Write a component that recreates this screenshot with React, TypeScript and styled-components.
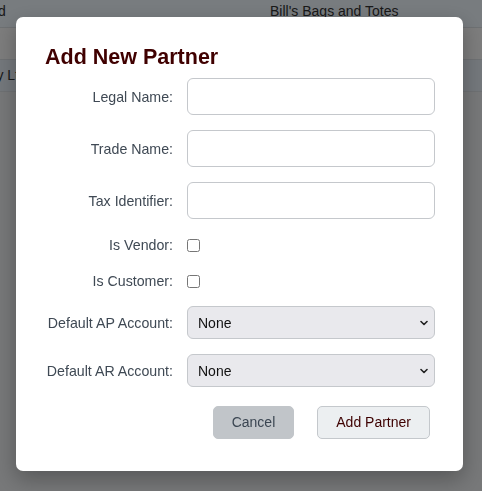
import React from "react";
import styled, { createGlobalStyle } from "styled-components";

const GlobalStyle = createGlobalStyle`
  html, body {
    margin: 0;
    padding: 0;
    background: #eef0f2;
    font-family: "Liberation Sans", Arial, sans-serif;
  }
`;

const Page = styled.div`
  width: 100%;
  height: 491px;
  overflow: hidden;
  background: #eef0f2;
`;

const Table = styled.div`
  margin: -4px 0 0 -79px;
  display: flex;
  flex-direction: column;
`;

const TableRow = styled.div<{ $bg: string }>`
  display: grid;
  grid-template-columns: 349px 1fr;
  height: 30px;
  padding-bottom: 1px;
  align-items: center;
  background: ${(p) => p.$bg};
  border-bottom: 1px solid #dde2e7;
  font-size: 14px;
  color: #333;
`;

const Overlay = styled.div`
  position: fixed;
  inset: 0;
  background: rgba(0, 0, 0, 0.5);
  display: flex;
  align-items: flex-start;
  padding: 17px 16px;
`;

const Modal = styled.div`
  width: 447px;
  box-sizing: border-box;
  background: #fff;
  border-radius: 7px;
  padding: 28px 28px 32px;
  box-shadow: 0 8px 22px rgba(0, 0, 0, 0.28);
`;

const Title = styled.h2`
  margin: 0 0 8px 1px;
  font-size: 21.5px;
  line-height: 25px;
  font-weight: 700;
  color: #400000;
`;

const Form = styled.form`
  display: grid;
  grid-template-columns: 129px 1fr;
  column-gap: 14px;
  row-gap: 15px;
  align-items: center;
`;

const Label = styled.label`
  text-align: right;
  font-size: 14.2px;
  color: #3f4954;
`;

const TextInput = styled.input`
  box-sizing: border-box;
  height: 37px;
  width: 100%;
  border: 1px solid #c5c8cc;
  border-radius: 6px;
  background: #fff;
  padding: 0 10px;
  font: 14px "Liberation Sans", Arial, sans-serif;
`;

const CheckCell = styled.div`
  height: 21px;
  display: flex;
  align-items: center;
`;

const Check = styled.input`
  margin: 2px 0 0 0;
  width: 13px;
  height: 13px;
`;

const SelectWrap = styled.div`
  position: relative;
  height: 33px;
`;

const Select = styled.select`
  box-sizing: border-box;
  appearance: none;
  height: 33px;
  width: 100%;
  border: 1px solid #c5c8cc;
  border-radius: 6px;
  background-color: #e9e9ed;
  padding: 0 24px 0 10px;
  font: 14px "Liberation Sans", Arial, sans-serif;
  color: #111;
`;

const Chevron = styled.svg`
  position: absolute;
  right: 7px;
  top: 14px;
  width: 8px;
  height: 6px;
  pointer-events: none;
`;

const Actions = styled.div`
  grid-column: 1 / -1;
  display: flex;
  justify-content: flex-end;
  gap: 23px;
  margin: 4px 5px 0 0;
`;

const Button = styled.button<{ $primary?: boolean }>`
  height: 33px;
  padding: 0 18px 2px;
  border-radius: 5px;
  font: 14px "Liberation Sans", Arial, sans-serif;
  border: 1px solid ${(p) => (p.$primary ? "#c4c8cc" : "#c1c5c9")};
  background: ${(p) => (p.$primary ? "#eceff1" : "#c1c5c9")};
  color: ${(p) => (p.$primary ? "#3d0000" : "#3b4652")};
  cursor: pointer;
`;

const rows = [
  { bg: "#f0f8ff", a: "Bagworks Ltd", b: "Bill's Bags and Totes" },
  { bg: "#fafafa", a: "", b: "" },
  { bg: "#e8f0f8", a: "Acme Supply Ltd", b: "" },
];

const AccountSelect = () => (
  <SelectWrap>
    <Select defaultValue="none">
      <option value="none">None</option>
    </Select>
    <Chevron viewBox="0 0 8 6">
      <polyline
        points="1,1.5 4,4.5 7,1.5"
        fill="none"
        stroke="#222"
        strokeWidth="1.6"
        strokeLinecap="round"
        strokeLinejoin="round"
      />
    </Chevron>
  </SelectWrap>
);

export default function App() {
  return (
    <Page>
      <GlobalStyle />
      <Table>
        {rows.map((r, i) => (
          <TableRow key={i} $bg={r.bg}>
            <span>{r.a}</span>
            <span>{r.b}</span>
          </TableRow>
        ))}
      </Table>
      <Overlay>
        <Modal>
          <Title>Add New Partner</Title>
          <Form onSubmit={(e) => e.preventDefault()}>
            <Label>Legal Name:</Label>
            <TextInput type="text" />
            <Label>Trade Name:</Label>
            <TextInput type="text" />
            <Label>Tax Identifier:</Label>
            <TextInput type="text" />
            <Label>Is Vendor:</Label>
            <CheckCell>
              <Check type="checkbox" />
            </CheckCell>
            <Label>Is Customer:</Label>
            <CheckCell>
              <Check type="checkbox" />
            </CheckCell>
            <Label>Default AP Account:</Label>
            <AccountSelect />
            <Label>Default AR Account:</Label>
            <AccountSelect />
            <Actions>
              <Button type="button">Cancel</Button>
              <Button type="submit" $primary>
                Add Partner
              </Button>
            </Actions>
          </Form>
        </Modal>
      </Overlay>
    </Page>
  );
}
